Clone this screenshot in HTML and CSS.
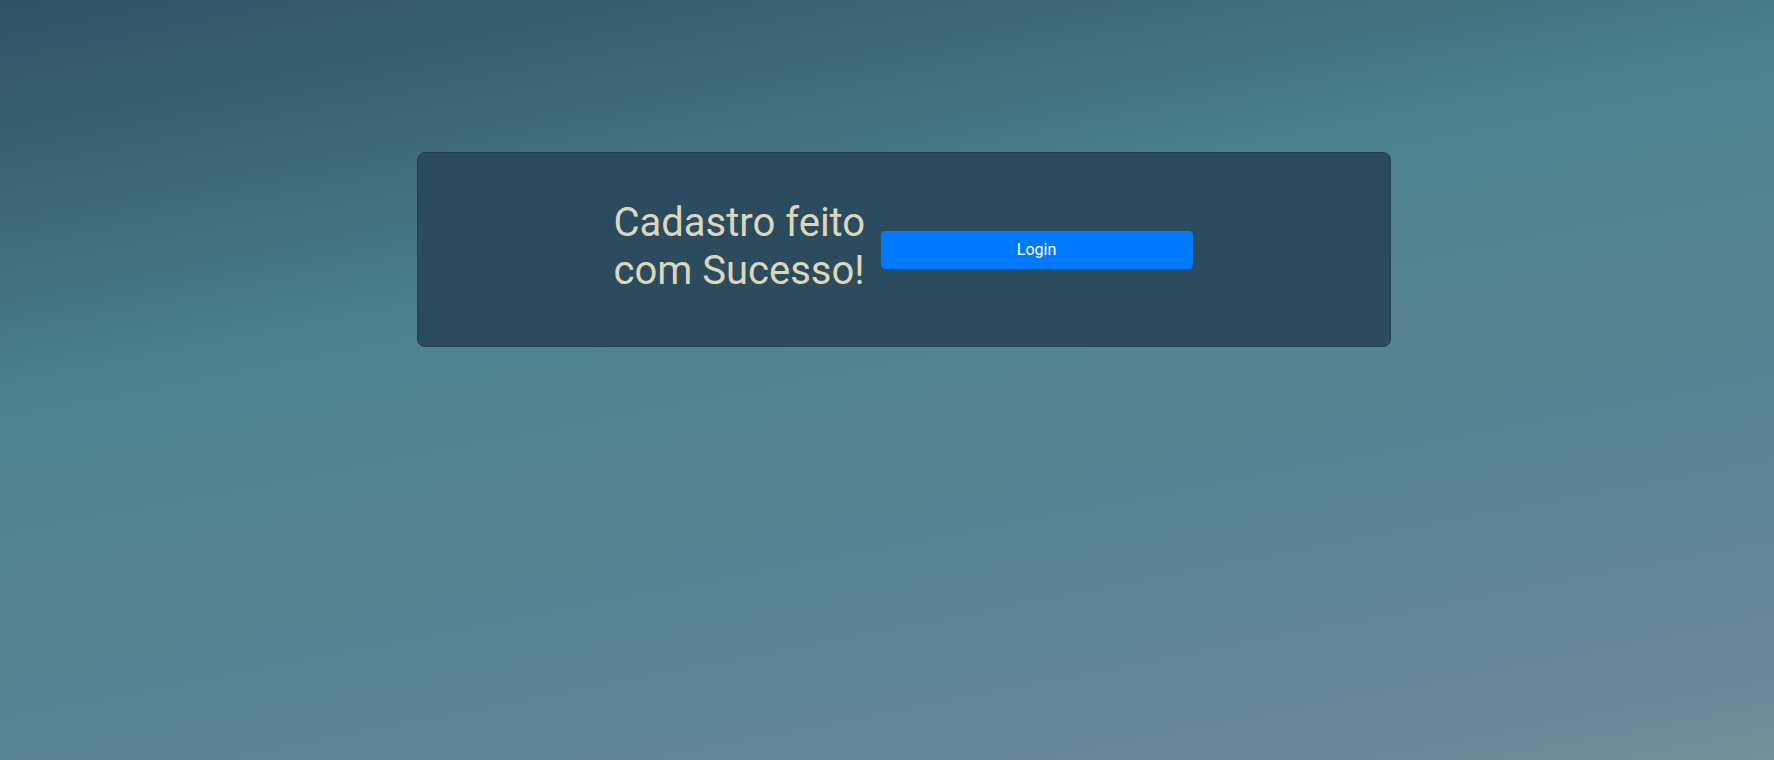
FILE: index.html
```html
<!DOCTYPE html>
<html lang="pt-BR">
<head>
<meta charset="utf-8">
<title>Cadastro</title>
<link rel="stylesheet" href="styles.css">
</head>
<body>
<main class="page">
  <section class="card">
    <h1 class="card-title">Cadastro feito com Sucesso!</h1>
    <button class="btn-login" type="button">Login</button>
  </section>
</main>
</body>
</html>
```
FILE: styles.css
```css
html, body {
  margin: 0;
  padding: 0;
  height: 100%;
}

body {
  font-family: Roboto, "Liberation Sans", sans-serif;
  background: linear-gradient(169deg,
    #2f5266 0%,
    #3e6878 20%,
    #4b8190 36%,
    #54828f 52%,
    #5a8497 67%,
    #62869a 82%,
    #6a879b 92%,
    #6e9294 100%);
  min-height: 760px;
  overflow: hidden;
}

.page {
  padding-top: 152px;
  padding-left: 417px;
}

.card {
  box-sizing: border-box;
  width: 974px;
  height: 195px;
  padding-right: 2px;
  background: #2b4c5e;
  border: 1px solid #22404f;
  border-radius: 8px;
  display: flex;
  align-items: center;
  justify-content: center;
}

.card-title {
  width: 267px;
  margin: 0 0 6px 0;
  font-size: 40px;
  font-weight: 400;
  line-height: 1.2;
  color: #ddd6bb;
}

.btn-login {
  width: 312px;
  height: 38px;
  padding: 6px 12px;
  font-family: Roboto, "Liberation Sans", sans-serif;
  font-size: 16px;
  line-height: 24px;
  color: #ffffff;
  background: #007bff;
  border: 1px solid #007bff;
  border-radius: 4px;
  cursor: pointer;
}
```
